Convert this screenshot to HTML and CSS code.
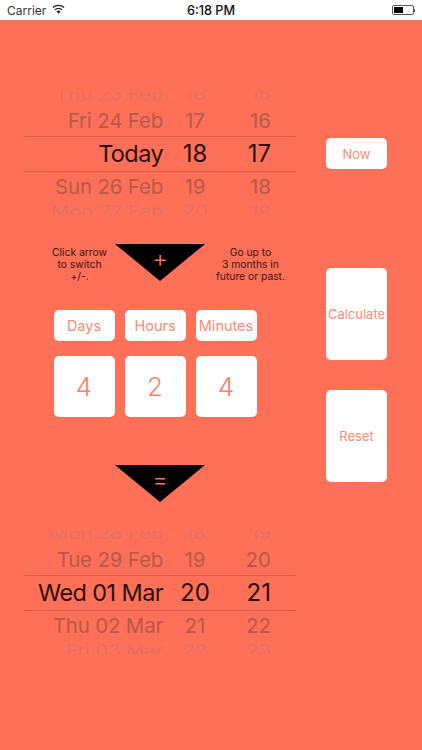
FILE: index.html
```html
<!DOCTYPE html>
<html lang="en">
<head>
<meta charset="utf-8">
<title>Date Calculator</title>
<link rel="stylesheet" href="styles.css">
</head>
<body>
<header class="status">
  <div class="status-left">
    <span>Carrier</span>
    <svg class="wifi" width="13" height="10" viewBox="0 0 14 10"><path d="M7 10 4.9 7.6a3 3 0 0 1 4.2 0Z" fill="#222"/><path d="M3.3 5.9a5.3 5.3 0 0 1 7.4 0" fill="none" stroke="#222" stroke-width="1.5"/><path d="M1 3.5a8.6 8.6 0 0 1 12 0" fill="none" stroke="#222" stroke-width="1.5"/></svg>
  </div>
  <div class="status-time">6:18 PM</div>
  <div class="status-right">
    <div class="battery"><div class="battery-fill"></div></div>
    <div class="battery-tip"></div>
  </div>
</header>
<main class="main">
  <section class="left">
    <div class="wheel">
      <div class="row far far-top"><span class="date">Thu 23 Feb</span><span class="hour">16</span><span class="min">15</span></div>
      <div class="row near"><span class="date">Fri 24 Feb</span><span class="hour">17</span><span class="min">16</span></div>
      <div class="row selected"><span class="date">Today</span><span class="hour">18</span><span class="min">17</span></div>
      <div class="row near near-after"><span class="date">Sun 26 Feb</span><span class="hour">19</span><span class="min">18</span></div>
      <div class="row far far-bottom"><span class="date">Mon 27 Feb</span><span class="hour">20</span><span class="min">19</span></div>
    </div>
    <div class="info">
      <p class="note note-left">Click arrow<br>to switch<br>+/-.</p>
      <div class="arrow"><span class="arrow-sign">+</span></div>
      <p class="note">Go up to<br>3 months in<br>future or past.</p>
    </div>
    <div class="units">
      <button class="btn unit">Days</button>
      <button class="btn unit">Hours</button>
      <button class="btn unit">Minutes</button>
    </div>
    <div class="values">
      <div class="value">4</div>
      <div class="value">2</div>
      <div class="value">4</div>
    </div>
    <div class="equals"><div class="arrow"><span class="arrow-sign">=</span></div></div>
    <div class="wheel wheel-result">
      <div class="row far far-top"><span class="date">Mon 28 Feb</span><span class="hour">18</span><span class="min">19</span></div>
      <div class="row near"><span class="date">Tue 29 Feb</span><span class="hour">19</span><span class="min">20</span></div>
      <div class="row selected"><span class="date">Wed 01 Mar</span><span class="hour">20</span><span class="min">21</span></div>
      <div class="row near near-after"><span class="date">Thu 02 Mar</span><span class="hour">21</span><span class="min">22</span></div>
      <div class="row far far-bottom"><span class="date">Fri 03 Mar</span><span class="hour">22</span><span class="min">23</span></div>
    </div>
  </section>
  <aside class="right">
    <button class="btn side now">Now</button>
    <button class="btn side tall calc">Calculate</button>
    <button class="btn side tall">Reset</button>
  </aside>
</main>
</body>
</html>
```
FILE: styles.css
```css
* { box-sizing: border-box; }
html, body { margin: 0; height: 100%; }
body {
  width: 422px;
  height: 750px;
  overflow: hidden;
  background: #ff7058;
  font-family: Inter, "Liberation Sans", sans-serif;
  display: flex;
  flex-direction: column;
}
.status {
  height: 20px;
  flex: none;
  background: #fff;
  display: grid;
  grid-template-columns: 1fr auto 1fr;
  align-items: center;
  padding: 0 7px;
  font-size: 12px;
  color: #222;
}
.status-left { display: flex; align-items: center; gap: 6px; color: #333; }
.wifi { margin-top: -2px; }
.status-time { font-size: 12.7px; font-weight: 500; color: #111; }
.status-right { display: flex; justify-content: flex-end; align-items: center; }
.battery {
  width: 22px;
  height: 10px;
  border: 1px solid #555;
  border-radius: 2px;
  padding: 1px;
}
.battery-fill { width: 9px; height: 100%; background: #000; }
.battery-tip { width: 1px; height: 3px; background: #555; }

.main { display: flex; flex: 1; }
.left { width: 272px; margin-left: 24px; padding-top: 72px; flex: none; }
.right {
  width: 61px;
  margin-left: 30px;
  padding-top: 118px;
  display: flex;
  flex-direction: column;
}

.wheel { height: 124px; display: flex; flex-direction: column; }
.wheel-result { margin-top: 29px; }
.row {
  display: grid;
  grid-template-columns: 139px 64px 44px;
  flex: none;
  white-space: nowrap;
}
.date { text-align: right; }
.hour { text-align: center; }
.min { text-align: right; }
.near {
  height: 32px;
  line-height: 34px;
  color: #b55a48;
  font-size: 20.5px;
}
.near .date { letter-spacing: -.2px; }
.near-after { height: 31px; line-height: 30px; }
.selected {
  height: 36px;
  line-height: 34px;
  font-size: 24px;
  color: #2b0f0a;
  border-top: 1px solid #d65f4a;
  border-bottom: 1px solid #d65f4a;
}
.selected .date { font-size: 23.5px; letter-spacing: -.6px; }
.far {
  height: 12px;
  overflow: hidden;
  color: #e0735e;
  font-size: 20.5px;
  line-height: 24px;
}
.far .date { letter-spacing: -.2px; }
.far-top span { transform: scaleY(.8); transform-origin: 50% 100%; margin-top: -12px; }
.far-bottom span { transform: scaleY(.8); transform-origin: 50% 0; margin-top: -1px; }

.info {
  margin-top: 28px;
  display: grid;
  grid-template-columns: 91px 90px 91px;
  height: 37px;
}
.note {
  margin: 0;
  font-size: 10.3px;
  line-height: 12px;
  padding-top: 2px;
  text-align: center;
  color: #331510;
}
.note-left { padding-left: 20px; }
.arrow {
  width: 90px;
  height: 37px;
  background: #000;
  clip-path: polygon(0 0, 100% 0, 50% 100%);
  display: flex;
  justify-content: center;
  padding-top: 2px;
}
.arrow-sign { color: #ff7058; font-size: 24px; font-weight: 300; line-height: 26px; }
.units, .values {
  display: flex;
  gap: 10px;
  margin-left: 29.5px;
}
.units { margin-top: 29px; }
.values { margin-top: 15px; }
.btn {
  border: 0;
  padding: 0;
  background: #fff;
  border-radius: 5px;
  color: #ff8a76;
  font-family: inherit;
}
.unit { width: 61px; height: 31px; font-size: 14.5px; }
.value {
  width: 61px;
  height: 61px;
  background: #fff;
  border-radius: 5px;
  color: #ff7f6a;
  font-size: 26px;
  font-weight: 300;
  display: flex;
  align-items: center;
  justify-content: center;
}
.equals { margin-top: 48px; margin-left: 91px; }
.side { width: 61px; font-size: 13px; }
.now { height: 31px; }
.tall { height: 92px; margin-top: 30px; }
.calc { margin-top: 99px; }
```
